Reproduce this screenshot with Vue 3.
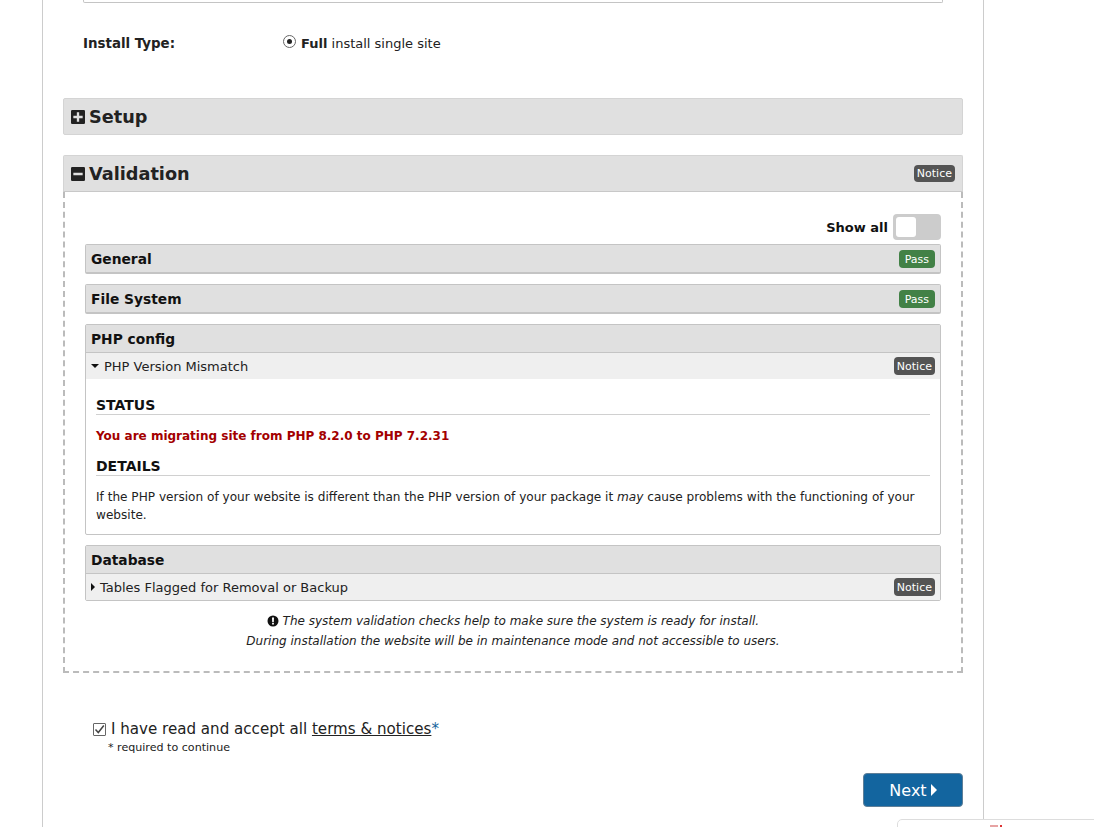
<script setup>
const passItems = ['General', 'File System']
</script>

<template>
  <div class="page">
    <div class="top-box"></div>

    <div class="install-row">
      <div class="install-label">Install Type:</div>
      <label class="install-option">
        <span class="radio"><span class="radio-dot"></span></span>
        <span><b>Full</b> install single site</span>
      </label>
    </div>

    <div class="panel-head setup">
      <svg class="sq-icon" viewBox="1 1 12 12"><path fill="#222" fill-rule="evenodd" d="M2 1h10a1 1 0 0 1 1 1v10a1 1 0 0 1-1 1H2a1 1 0 0 1-1-1V2a1 1 0 0 1 1-1zM6 3v3H3v2h3v3h2V8h3V6H8V3z"/></svg>
      <span>Setup</span>
    </div>

    <div class="panel-head validation">
      <svg class="sq-icon" viewBox="1 1 12 12"><path fill="#222" fill-rule="evenodd" d="M2 1h10a1 1 0 0 1 1 1v10a1 1 0 0 1-1 1H2a1 1 0 0 1-1-1V2a1 1 0 0 1 1-1zM3 6v2h8V6z"/></svg>
      <span>Validation</span>
      <span class="badge notice head-badge">Notice</span>
    </div>

    <div class="validation-body">
      <div class="show-all">
        <span>Show all</span>
        <span class="toggle"><span class="knob"></span></span>
      </div>

      <div v-for="item in passItems" :key="item" class="sub-panel pass-panel">
        <div class="sub-head">
          <span>{{ item }}</span>
          <span class="badge pass">Pass</span>
        </div>
      </div>

      <div class="sub-panel">
        <div class="sub-head">PHP config</div>
        <div class="check-row open">
          <span class="caret-down"></span>
          <span>PHP Version Mismatch</span>
          <span class="badge notice">Notice</span>
        </div>
        <div class="check-detail">
          <div class="detail-title">STATUS</div>
          <div class="status-text">You are migrating site from PHP 8.2.0 to PHP 7.2.31</div>
          <div class="detail-title">DETAILS</div>
          <div class="detail-text">If the PHP version of your website is different than the PHP version of your package it <i>may</i> cause problems with the functioning of your website.</div>
        </div>
      </div>

      <div class="sub-panel">
        <div class="sub-head">Database</div>
        <div class="check-row">
          <span class="caret-right"></span>
          <span>Tables Flagged for Removal or Backup</span>
          <span class="badge notice">Notice</span>
        </div>
      </div>

      <div class="note">
        <div>
          <svg class="info-icon" viewBox="0 0 12 12"><path fill="#111" fill-rule="evenodd" d="M6 .5a5.500 5.500 0 1 1 0 11A5.500 5.500 0 0 1 6 .5zM5 2.400l.2 4.600h1.600L7 2.400zM5.100 7.800v1.800h1.800V7.800z"/></svg>
          The system validation checks help to make sure the system is ready for install.
        </div>
        <div>During installation the website will be in maintenance mode and not accessible to users.</div>
      </div>
    </div>

    <div class="accept">
      <div class="accept-line">
        <span class="checkbox">
          <svg viewBox="0 0 11 11"><path d="M1.500 5.500l2.800 3L9.800 1.500" fill="none" stroke="#444" stroke-width="1.500"/></svg>
        </span>
        <span>I have read and accept all <span class="terms">terms &amp; notices</span><span class="star">*</span></span>
      </div>
      <div class="required">* required to continue</div>
    </div>

    <div class="actions">
      <button class="next" type="button">
        Next
        <span class="next-caret"></span>
      </button>
    </div>
  </div>

  <div class="corner-widget"><span class="corner-mark"></span><span class="corner-dot"></span></div>
</template>

<style>
html, body { margin: 0; padding: 0; background: #fff; overflow: hidden; }
</style>

<style scoped>
.page {
  box-sizing: border-box;
  width: 942px;
  height: 827px;
  margin-left: 42px;
  padding: 0 20px;
  border-left: 1px solid #ccc;
  border-right: 1px solid #ccc;
  overflow: hidden;
  font-family: "DejaVu Sans", Verdana, sans-serif;
  font-size: 12px;
  color: #222;
}
.top-box {
  height: 2px;
  margin: 0 20px;
  border: 1px solid #c4c4c4;
  border-top: 0;
  border-radius: 0 0 2px 2px;
}
.install-row {
  display: flex;
  align-items: center;
  height: 20px;
  margin: 30px 0 0 20px;
  font-size: 13px;
}
.install-label { width: 200px; font-weight: 700; font-size: 13.400px; }
.install-option { display: flex; align-items: center; gap: 5px; }
.radio {
  box-sizing: border-box;
  display: flex;
  align-items: center;
  justify-content: center;
  width: 13px;
  height: 13px;
  margin-top: -3px;
  border: 1px solid #666;
  border-radius: 50%;
}
.radio-dot { width: 5px; height: 5px; border-radius: 50%; background: #222; }
.panel-head {
  box-sizing: border-box;
  display: flex;
  align-items: center;
  gap: 4px;
  height: 37px;
  padding: 0 7px;
  background: #e0e0e0;
  border: 1px solid #d4d4d4;
  border-radius: 2px;
  font-size: 17.700px;
  font-weight: 700;
  color: #222;
}
.setup { margin-top: 45px; }
.validation { margin-top: 20px; border-radius: 2px 2px 0 0; border-bottom-color: #c8c8c8; }
.sq-icon { width: 14px; height: 14px; flex: none; }
.badge {
  display: inline-flex;
  align-items: center;
  justify-content: center;
  box-sizing: border-box;
  height: 18px;
  margin-left: auto;
  padding: 0 3px;
  border-radius: 4px;
  font-size: 11px;
  font-weight: 400;
  color: #fff;
}
.notice { background: #545454; height: 17px; }
.pass { background: #428146; padding: 0 6px; margin-top: 1px; }
.validation-body {
  box-sizing: border-box;
  height: 481px;
  padding: 22px 20px 0;
  border: 2px dashed #bbb;
  border-top: 0;
}
.show-all {
  display: flex;
  justify-content: flex-end;
  align-items: center;
  gap: 5px;
  height: 26px;
  margin-bottom: 4px;
  font-size: 13px;
  font-weight: 700;
  color: #111;
}
.toggle {
  box-sizing: border-box;
  display: flex;
  align-items: center;
  width: 48px;
  height: 26px;
  padding-left: 3px;
  background: #ccc;
  border-radius: 4px;
}
.knob { width: 20px; height: 20px; background: #fff; border-radius: 3px; }
.sub-panel {
  margin-bottom: 10px;
  border: 1px solid #c4c4c4;
  border-radius: 2px;
  color: #111;
}
.pass-panel { border-bottom-width: 2px; }
.sub-head {
  box-sizing: border-box;
  display: flex;
  align-items: center;
  height: 27px;
  padding: 0 5px;
  background: #e0e0e0;
  font-size: 13.800px;
  font-weight: 700;
}
.check-row {
  box-sizing: border-box;
  display: flex;
  align-items: center;
  height: 27px;
  padding: 0 5px;
  background: #efefef;
  border-top: 1px solid #c4c4c4;
  font-size: 13px;
  color: #222;
}
.check-row .badge { height: 18px; }
.caret-down {
  width: 0;
  height: 0;
  margin-right: 5px;
  border-left: 4px solid transparent;
  border-right: 4px solid transparent;
  border-top: 4px solid #111;
}
.caret-right {
  width: 0;
  height: 0;
  margin-right: 5px;
  border-top: 4px solid transparent;
  border-bottom: 4px solid transparent;
  border-left: 4px solid #111;
}
.check-detail { padding: 18px 10px 10px; height: 155px; box-sizing: border-box; }
.detail-title {
  height: 17px;
  line-height: 17px;
  border-bottom: 1px solid #d0d0d0;
  font-size: 14px;
  font-weight: 700;
  color: #111;
}
.status-text {
  margin: 13px 0 14px;
  line-height: 16px;
  font-size: 12px;
  font-weight: 700;
  color: #a30000;
}
.detail-text { margin-top: 12px; line-height: 18px; font-size: 12.100px; color: #222; }
.note {
  margin-top: 9px;
  text-align: center;
  line-height: 20px;
  font-size: 12px;
  font-style: italic;
  color: #222;
}
.info-icon { width: 12px; height: 12px; vertical-align: -2px; }
.accept { margin: 46px 0 0 30px; }
.accept-line { display: flex; align-items: center; gap: 5px; height: 20px; font-size: 15.100px; color: #222; }
.checkbox {
  box-sizing: border-box;
  display: block;
  width: 13px;
  height: 13px;
  border: 1px solid #666;
  border-radius: 1px;
}
.checkbox svg { display: block; width: 11px; height: 11px; }
.terms { text-decoration: underline; }
.star { color: #15639b; }
.required { margin: 1px 0 0 15px; font-size: 11.100px; line-height: 15px; color: #222; }
.actions { display: flex; justify-content: flex-end; margin-top: 18px; }
.next {
  box-sizing: border-box;
  display: flex;
  align-items: center;
  justify-content: center;
  gap: 4px;
  width: 100px;
  height: 34px;
  background: #13659f;
  border: 1px solid #5f7f98;
  border-radius: 4px;
  font-family: inherit;
  font-size: 16px;
  color: #fff;
}
.next-caret {
  width: 0;
  height: 0;
  border-top: 6px solid transparent;
  border-bottom: 6px solid transparent;
  border-left: 6px solid #fff;
}
.corner-widget {
  position: fixed;
  left: 897px;
  top: 819px;
  width: 220px;
  height: 40px;
  background: #fff;
  border: 1px solid #ddd;
  border-radius: 5px;
}
.corner-mark {
  position: absolute;
  left: 92px;
  top: 5px;
  width: 8px;
  height: 2px;
  background: #e7a3a3;
}
.corner-dot {
  position: absolute;
  left: 102px;
  top: 5px;
  width: 2px;
  height: 2px;
  background: #d33;
}
</style>
